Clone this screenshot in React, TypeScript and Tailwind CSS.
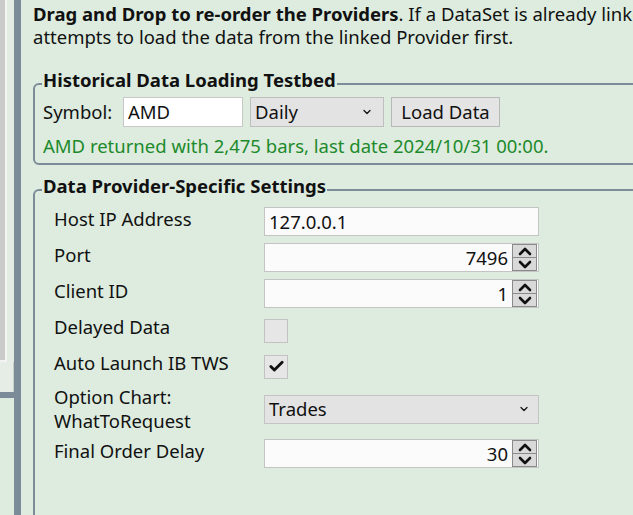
import { ChevronDown, Check } from "lucide-react";

const font = { fontFamily: '"Noto Sans", "Open Sans", sans-serif' };

function Arrow({ up }: { up?: boolean }) {
    return (
        <svg width="14" height="9" viewBox="0 0 14 9" fill="none" stroke="#111" strokeWidth="2.6" strokeLinecap="round" strokeLinejoin="round">
            {up ? <polyline points="2,7 7,2 12,7" /> : <polyline points="2,2 7,7 12,2" />}
        </svg>
    );
}

function Spinner() {
    return (
        <div className="flex flex-col w-[25px] h-[27px] mr-[1px] border border-[#8a8a8a] bg-[#d9d9d9]">
            <div className="flex-1 flex items-center justify-center border-b border-[#8a8a8a]">
                <Arrow up />
            </div>
            <div className="flex-1 flex items-center justify-center">
                <Arrow />
            </div>
        </div>
    );
}

function NumberBox({ value }: { value: string }) {
    return (
        <div className="flex items-center h-[29px] w-[275px] border border-[#c4c4c4] bg-[#fbfbfb]">
            <span className="flex-1 text-right pr-[4px]">{value}</span>
            <Spinner />
        </div>
    );
}

function Row({ label, children }: { label: React.ReactNode; children: React.ReactNode }) {
    return (
        <div className="flex items-center h-[29px]">
            <div className="w-[210px] leading-[24px] -mt-[5px] whitespace-nowrap">{label}</div>
            {children}
        </div>
    );
}

export default function App() {
    return (
        <div className="w-[633px] h-[515px] overflow-hidden flex bg-[#ddecdf] text-[18.5px] text-[#111]" style={font}>
            {/* left edge: neighbouring pane and splitter */}
            <div className="w-[14px] shrink-0 flex flex-col">
                <div className="h-[362px] flex">
                    <div className="w-[5px] bg-[#cacaca] border-b-2 border-[#f2f2f2]" />
                    <div className="w-[2px] bg-[#f4f4f4]" />
                    <div className="flex-1 bg-[#e2ece2]" />
                </div>
                <div className="h-[30px] bg-[#e6ede6] border-r border-[#c6cec6]" />
                <div className="h-[6px] bg-[#7b8b98] -mr-[7px]" />
                <div className="flex-1 bg-[#ddecdf]" />
            </div>
            <div className="w-[7px] shrink-0 bg-[#7b8b98]" />

            {/* main pane */}
            <div className="w-[720px] shrink-0 pl-[12px] pt-[2px]">
                <div className="whitespace-nowrap leading-[23px]">
                    <span className="font-bold">Drag and Drop to re-order the Providers</span>. If a DataSet is already linked, the Chart
                </div>
                <div className="whitespace-nowrap leading-[23px]">attempts to load the data from the linked Provider first.</div>

                <fieldset className="mt-[21px] border-2 border-[#7d8c99] rounded-[6px] pl-[8px] pr-0 pb-[5px] pt-0">
                    <legend className="font-bold px-[1px] pb-[8px] leading-[22px] -ml-[1px] mr-[4px]">Historical Data Loading Testbed</legend>
                    <div className="flex items-center gap-[7px] -mt-[2px]">
                        <span className="w-[73px]">Symbol:</span>
                        <div className="h-[30px] w-[120px] border border-[#c8c8c8] bg-white flex items-center pl-[4px]">AMD</div>
                        <div className="h-[30px] w-[134px] border border-[#bfbfbf] bg-[#e3e3e3] flex items-center pl-[4px] pr-[10px]">
                            <span className="flex-1">Daily</span>
                            <ChevronDown className="w-[12px] h-[12px]" strokeWidth={2.5} />
                        </div>
                        <div className="h-[30px] w-[109px] border border-[#b8b8b8] bg-[#e4e4e4] flex items-center justify-center">Load Data</div>
                    </div>
                    <div className="text-[#1d8a2b] mt-[7px] leading-[24px]">AMD returned with 2,475 bars, last date 2024/10/31 00:00.</div>
                </fieldset>

                <fieldset className="mt-[10px] border-2 border-[#7d8c99] rounded-[6px] pl-[19px] pr-0 pt-[2px] pb-[80px]">
                    <legend className="font-bold px-[1px] pb-[8px] leading-[22px] -ml-[12px] mr-[4px]">Data Provider-Specific Settings</legend>
                    <div className="flex flex-col gap-[7px]">
                        <Row label="Host IP Address">
                            <div className="h-[29px] w-[275px] border border-[#c4c4c4] bg-[#fbfbfb] flex items-center pl-[4px]">127.0.0.1</div>
                        </Row>
                        <Row label="Port">
                            <NumberBox value="7496" />
                        </Row>
                        <Row label="Client ID">
                            <NumberBox value="1" />
                        </Row>
                        <Row label="Delayed Data">
                            <div className="w-[24px] h-[24px] border border-[#c2c2c2] bg-[#e6e6e6] mt-[2px]" />
                        </Row>
                        <Row label="Auto Launch IB TWS">
                            <div className="w-[24px] h-[24px] border border-[#c2c2c2] bg-[#e6e6e6] mt-[2px] flex items-center justify-center">
                                <Check className="w-[17px] h-[17px]" strokeWidth={4} />
                            </div>
                        </Row>
                        <div className="flex items-center h-[48px]">
                            <div className="w-[210px] leading-[24px] -mt-[4px]">
                                Option Chart:<br />WhatToRequest
                            </div>
                            <div className="h-[29px] w-[275px] -mt-[4px] border border-[#c4c4c4] bg-[#e3e3e3] flex items-center pl-[4px] pr-[8px]">
                                <span className="flex-1">Trades</span>
                                <ChevronDown className="w-[12px] h-[12px]" strokeWidth={2.5} />
                            </div>
                        </div>
                        <div className="-mt-[3px]">
                            <Row label="Final Order Delay">
                                <NumberBox value="30" />
                            </Row>
                        </div>
                    </div>
                </fieldset>
            </div>
        </div>
    );
}
